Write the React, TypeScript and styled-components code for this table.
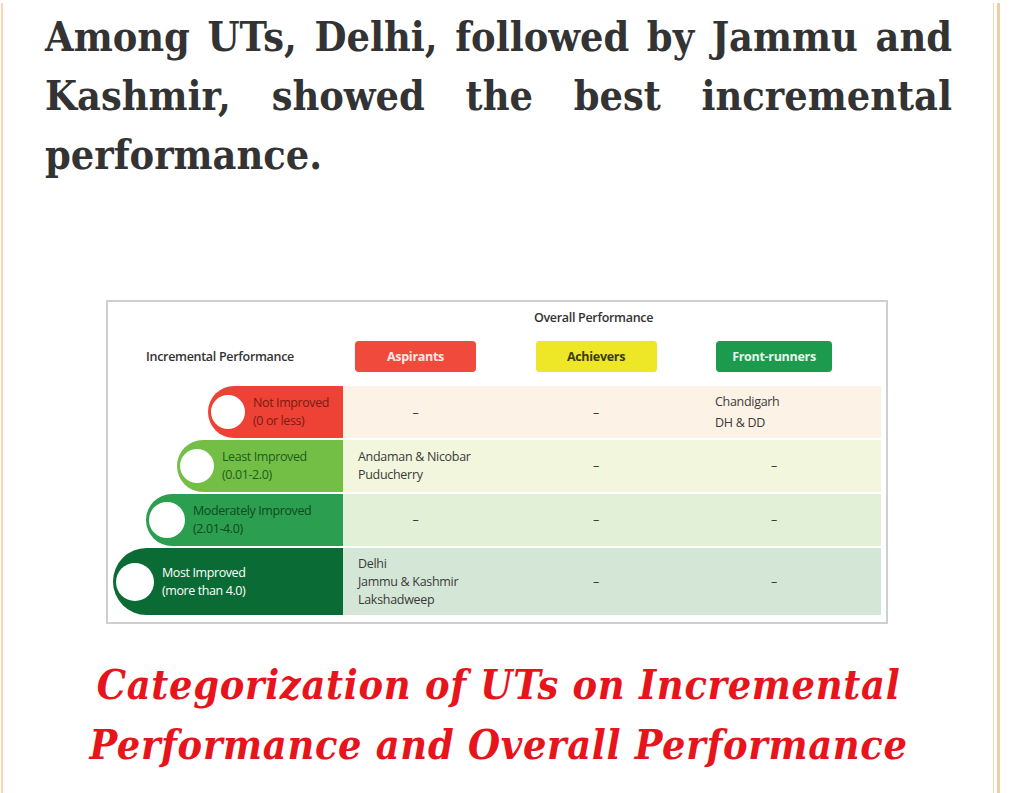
import React from "react";
import styled, { createGlobalStyle } from "styled-components";

const Global = createGlobalStyle`
  html, body { margin: 0; padding: 0; background: #ffffff; }
  body { font-family: "DejaVu Serif", serif; }
`;

const Frame = styled.div`
  box-sizing: border-box;
  width: 999px;
  min-height: 790px;
  margin: 3px 0 0 1px;
  border-left: 2px solid #f5d7b3;
  border-right: 3px solid #f1cda3;
`;

const Article = styled.div`
  box-sizing: border-box;
  min-height: 790px;
  margin-right: 3px;
  border-right: 1px solid #f3d3ad;
  padding: 5px 41px 0 42px;
  display: flex;
  flex-direction: column;
`;

const Lead = styled.p`
  margin: 0;
  font-family: "DejaVu Serif", serif;
  font-stretch: condensed;
  font-weight: 700;
  font-size: 41px;
  line-height: 59px;
  color: #333333;
  text-align: justify;
`;

const Figure = styled.div`
  align-self: flex-start;
  margin: 115px 0 0 61px;
  box-sizing: border-box;
  width: 782px;
  border: 2px solid #cfcfcf;
  background: #ffffff;
  padding: 7px 5px 7px 5px;
  font-family: "Open Sans", "Noto Sans", sans-serif;
  color: #333333;
  display: grid;
  grid-template-columns: 230px 145px 216px 140px 37px;
  row-gap: 2px;
`;

const OverallHead = styled.div`
  grid-column: 2 / 5;
  text-align: center;
  font-size: 12.5px;
  letter-spacing: -0.3px;
  font-weight: 600;
  line-height: 18px;
  margin-bottom: 12px;
`;

const HeadCell = styled.div<{ $pad?: number }>`
  display: flex;
  align-items: center;
  justify-content: ${(p) => (p.$pad !== undefined ? "flex-start" : "center")};
  padding-left: ${(p) => p.$pad ?? 0}px;
  height: 31px;
  margin-bottom: 12px;
  font-size: 12.5px;
  letter-spacing: -0.3px;
  font-weight: 600;
`;

const Pill = styled.div<{ $bg: string; $fg: string; $w: number }>`
  box-sizing: border-box;
  width: ${(p) => p.$w}px;
  height: 31px;
  border-radius: 4px;
  background: ${(p) => p.$bg};
  color: ${(p) => p.$fg};
  display: flex;
  align-items: center;
  justify-content: center;
  font-size: 12.5px;
  font-weight: 700;
  letter-spacing: -0.3px;
  box-shadow: 0 0 1px rgba(0, 0, 0, 0.15);
`;

const LabelCell = styled.div`
  display: flex;
  justify-content: flex-end;
`;

const Tab = styled.div<{ $bg: string; $fg: string; $w: number; $h: number }>`
  box-sizing: border-box;
  width: ${(p) => p.$w}px;
  height: ${(p) => p.$h}px;
  background: ${(p) => p.$bg};
  color: ${(p) => p.$fg};
  border-radius: ${(p) => p.$h / 2}px 0 0 ${(p) => p.$h / 2}px;
  display: flex;
  align-items: center;
  padding-left: 3px;
  gap: 8px;
  font-size: 12.5px;
  letter-spacing: -0.4px;
  line-height: 18px;
`;

const Dot = styled.div<{ $d: number }>`
  flex: none;
  width: ${(p) => p.$d}px;
  height: ${(p) => p.$d}px;
  border-radius: 50%;
  background: #ffffff;
`;

const Cell = styled.div<{ $bg: string; $pad?: number; $lh: number }>`
  background: ${(p) => p.$bg};
  display: flex;
  flex-direction: column;
  justify-content: center;
  align-items: ${(p) => (p.$pad !== undefined ? "flex-start" : "center")};
  padding-left: ${(p) => p.$pad ?? 0}px;
  font-size: 12.5px;
  letter-spacing: -0.3px;
  line-height: ${(p) => p.$lh}px;
  color: #3a3a3a;
`;

const Caption = styled.p`
  margin: 31px 0 0;
  font-family: "DejaVu Serif", serif;
  font-stretch: condensed;
  font-style: italic;
  font-weight: 700;
  font-size: 41px;
  letter-spacing: 0.7px;
  line-height: 60px;
  color: #e8141c;
  text-align: center;
`;

type Row = {
  label: [string, string];
  tab: string;
  fg: string;
  w: number;
  h: number;
  dot: number;
  bg: string;
  lh: number;
  c1: string[];
  c2: string[];
  c3: string[];
};

const rows: Row[] = [
  {
    label: ["Not Improved", "(0 or less)"],
    tab: "#ee4236",
    fg: "#7d1a12",
    w: 135,
    h: 52,
    dot: 34,
    bg: "#fcf2e5",
    lh: 21,
    c1: ["–"],
    c2: ["–"],
    c3: ["Chandigarh", "DH & DD"],
  },
  {
    label: ["Least Improved", "(0.01-2.0)"],
    tab: "#73bf45",
    fg: "#1f5a22",
    w: 166,
    h: 52,
    dot: 34,
    bg: "#f1f6dd",
    lh: 18,
    c1: ["Andaman & Nicobar", "Puducherry"],
    c2: ["–"],
    c3: ["–"],
  },
  {
    label: ["Moderately Improved", "(2.01-4.0)"],
    tab: "#2b9e4f",
    fg: "#0e4a22",
    w: 197,
    h: 52,
    dot: 36,
    bg: "#e2f0d8",
    lh: 18,
    c1: ["–"],
    c2: ["–"],
    c3: ["–"],
  },
  {
    label: ["Most Improved", "(more than 4.0)"],
    tab: "#0b6b35",
    fg: "#ffffff",
    w: 230,
    h: 67,
    dot: 38,
    bg: "#d4e7d6",
    lh: 18,
    c1: ["Delhi", "Jammu & Kashmir", "Lakshadweep"],
    c2: ["–"],
    c3: ["–"],
  },
];

const Lines = ({ items }: { items: string[] }) => (
  <>
    {items.map((t, i) => (
      <span key={i}>{t}</span>
    ))}
  </>
);

export default function App() {
  return (
    <>
      <Global />
      <Frame>
        <Article>
          <Lead>
            Among UTs, Delhi, followed by Jammu and Kashmir, showed the best
            incremental performance.
          </Lead>
          <Figure>
            <div />
            <OverallHead>Overall Performance</OverallHead>
            <div />
            <HeadCell $pad={33}>Incremental Performance</HeadCell>
            <HeadCell>
              <Pill $bg="#ef4a3b" $fg="#fde9e4" $w={121}>
                Aspirants
              </Pill>
            </HeadCell>
            <HeadCell>
              <Pill $bg="#ede728" $fg="#3b3a12" $w={121}>
                Achievers
              </Pill>
            </HeadCell>
            <HeadCell>
              <Pill $bg="#1c9a4e" $fg="#e8f5ec" $w={116}>
                Front-runners
              </Pill>
            </HeadCell>
            <div />
            {rows.map((r, i) => (
              <React.Fragment key={i}>
                <LabelCell>
                  <Tab $bg={r.tab} $fg={r.fg} $w={r.w} $h={r.h}>
                    <Dot $d={r.dot} />
                    <div>
                      {r.label[0]}
                      <br />
                      {r.label[1]}
                    </div>
                  </Tab>
                </LabelCell>
                <Cell $bg={r.bg} $lh={r.lh} $pad={r.c1.length > 1 ? 15 : undefined}>
                  <Lines items={r.c1} />
                </Cell>
                <Cell $bg={r.bg} $lh={r.lh}>
                  <Lines items={r.c2} />
                </Cell>
                <Cell $bg={r.bg} $lh={r.lh} $pad={r.c3.length > 1 ? 11 : undefined}>
                  <Lines items={r.c3} />
                </Cell>
                <Cell $bg={r.bg} $lh={r.lh} />
              </React.Fragment>
            ))}
          </Figure>
          <Caption>
            Categorization of UTs on Incremental
            <br />
            Performance and Overall Performance
          </Caption>
        </Article>
      </Frame>
    </>
  );
}
